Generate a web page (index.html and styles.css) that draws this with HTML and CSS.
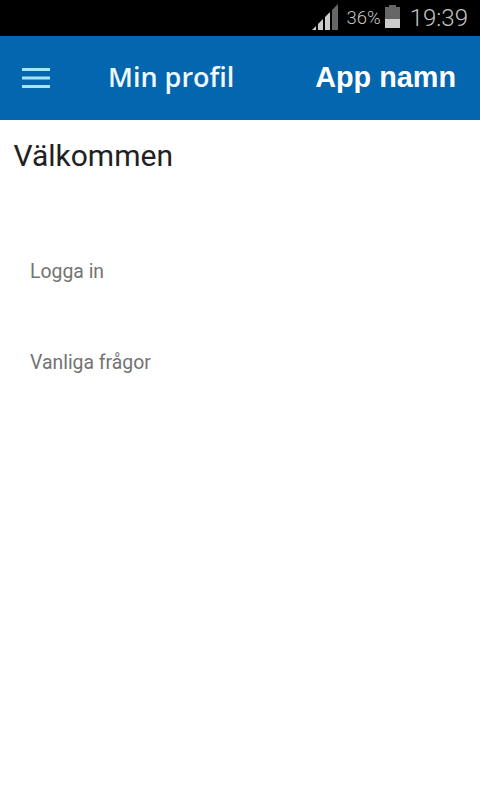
FILE: index.html
```html
<!DOCTYPE html>
<html lang="sv">
<head>
    <meta charset="UTF-8">
    <meta name="viewport" content="width=device-width, initial-scale=1.0">
    <title>Min profil</title>
    <link rel="stylesheet" href="styles.css">
</head>
<body>
    <div class="status-bar">
        <svg class="signal" width="26" height="26" viewBox="0 0 26 26">
            <polygon points="0,26 4,22 4,26" fill="#ccc"/>
            <polygon points="6,26 6,20 11,15 11,26" fill="#ccc"/>
            <polygon points="13,26 13,13 18,8 18,26" fill="#ccc"/>
            <polygon points="20,26 20,6 26,0 26,26" fill="#666"/>
        </svg>
        <span class="battery-text">36%</span>
        <div class="battery">
            <div class="battery-cap"></div>
            <div class="battery-empty"></div>
            <div class="battery-full"></div>
        </div>
        <span class="clock">19:39</span>
    </div>

    <header class="app-bar">
        <svg class="menu-icon" width="28" height="20" viewBox="0 0 28 20">
            <rect x="0" y="0" width="28" height="3" fill="#a8e4ff"/>
            <rect x="0" y="8.5" width="28" height="3" fill="#a8e4ff"/>
            <rect x="0" y="17" width="28" height="3" fill="#a8e4ff"/>
        </svg>
        <h1 class="page-title">Min profil</h1>
        <span class="app-name">App namn</span>
    </header>

    <main class="content">
        <h2 class="welcome">Välkommen</h2>
        <ul class="menu-list">
            <li>Logga in</li>
            <li>Vanliga frågor</li>
        </ul>
    </main>
</body>
</html>
```

FILE: styles.css
```css
html, body {
    margin: 0;
    padding: 0;
}
body {
    width: 480px;
    height: 800px;
    overflow: hidden;
    background: #fff;
    font-family: Roboto, "Noto Sans", sans-serif;
}
.status-bar {
    height: 36px;
    background: #000;
    display: flex;
    align-items: center;
    justify-content: flex-end;
    padding-right: 12px;
    color: #c4c4c4;
}
.signal {
    margin-right: 9px;
    margin-top: -2px;
}
.battery-text {
    font-size: 18.5px;
    font-weight: 300;
    margin-right: 4px;
}
.battery {
    width: 15px;
    height: 23px;
    margin-right: 10px;
    margin-top: -3px;
    display: flex;
    flex-direction: column;
    align-items: center;
}
.battery-cap {
    width: 7px;
    height: 2px;
    background: #666;
}
.battery-empty {
    width: 15px;
    height: 12px;
    background: #666;
}
.battery-full {
    width: 15px;
    height: 9px;
    background: #ccc;
}
.clock {
    font-size: 24px;
    font-weight: 300;
}
.app-bar {
    height: 84px;
    background: #0466ae;
    display: flex;
    align-items: center;
    color: #fff;
    padding-left: 22px;
    padding-right: 24px;
}
.menu-icon {
    margin-right: 58px;
}
.page-title {
    margin: 0;
    margin-top: -4px;
    font-family: "Open Sans", sans-serif;
    font-size: 27px;
    font-weight: 600;
    flex: 1;
    color: #eefaff;
}
.app-name {
    font-family: "Liberation Sans", Arial, sans-serif;
    font-size: 28.8px;
    font-weight: 700;
    margin-top: -1px;
}
.content {
    padding: 18px 14px 0;
}
.welcome {
    margin: 0 0 0 -0.5px;
    font-size: 30px;
    font-weight: 400;
    line-height: 36px;
    color: #212121;
}
.menu-list {
    list-style: none;
    margin: 0;
    padding: 0 16px;
}
.menu-list li {
    font-size: 19.4px;
    line-height: 24px;
    color: #737373;
    margin-top: 67px;
}
.menu-list li:first-child {
    margin-top: 86px;
}
```
